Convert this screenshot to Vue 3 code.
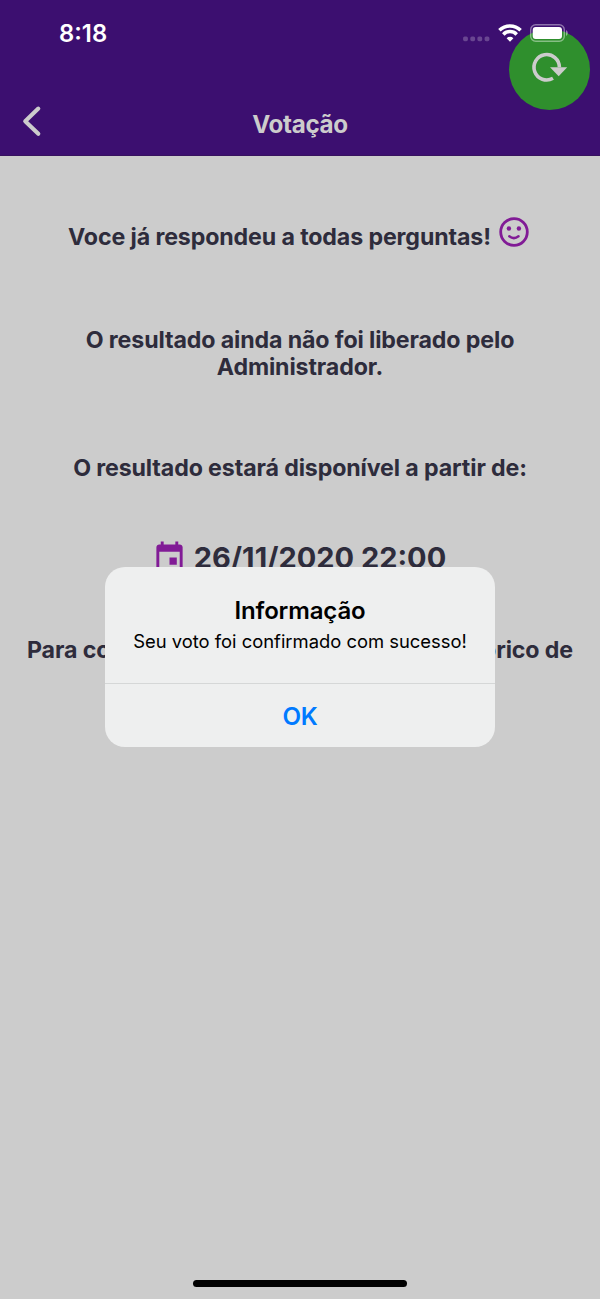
<script setup>
const signalDots = [2.5, 9.7, 16.8, 24]
</script>

<template>
  <div class="screen">
    <header class="header">
      <div class="status">
        <span class="clock">8:18</span>
        <div class="indicators">
          <svg class="signal" width="27" height="18" viewBox="0 0 27 18">
            <rect v-for="x in signalDots" :key="x" :x="x - 2.4" y="12.4" width="4.8" height="4.8" rx="1.6" fill="#fff" fill-opacity=".23" />
          </svg>
          <svg class="wifi" width="24" height="18" viewBox="0 0 24 18">
            <g fill="none" stroke="#fff" stroke-width="3.5">
              <path d="M1.4 6.3A15 15 0 0 1 22.6 6.3" />
              <path d="M5.3 10.4A9.4 9.4 0 0 1 18.7 10.4" />
            </g>
            <path d="M12 17.7L8.6 14.2A4.9 4.9 0 0 1 15.4 14.2Z" fill="#fff" />
          </svg>
          <svg class="battery" width="38" height="18" viewBox="0 0 38 18">
            <rect x=".7" y=".7" width="33.6" height="16.6" rx="5" fill="none" stroke="#fff" stroke-opacity=".42" stroke-width="1.4" />
            <rect x="2.7" y="2.9" width="29.3" height="12.2" rx="3" fill="#fff" />
            <path d="M36 6v6q1.8-.8 1.8-3T36 6z" fill="#fff" fill-opacity=".45" />
          </svg>
        </div>
      </div>
      <div class="navbar">
        <svg class="back" width="20" height="32" viewBox="0 0 20 32">
          <path d="M16.3 3.6L3.2 16.2L16.3 28.8" fill="none" stroke="#ccc" stroke-width="4.1" stroke-linecap="round" stroke-linejoin="round" />
        </svg>
        <h1 class="title">Votação</h1>
      </div>
      <button class="refresh" aria-label="Atualizar">
        <svg width="81" height="81" viewBox="0 0 81 81">
          <path d="M50.4 38.3A12.7 12.7 0 1 0 44 49.3" fill="none" stroke="#ccc" stroke-width="3.6" />
          <path d="M41 38.3H58.2L49.7 47.2Z" fill="#ccc" />
        </svg>
      </button>
    </header>

    <main class="content">
      <p class="line answered">
        <span class="answered-text">Voce já respondeu a todas perguntas!</span>
        <svg class="smile" width="30" height="30" viewBox="0 0 30 30">
          <circle cx="15" cy="15" r="13.3" fill="none" stroke="#811b96" stroke-width="2.8" />
          <circle cx="9.9" cy="11.5" r="2.2" fill="#811b96" />
          <circle cx="19.9" cy="11.5" r="2.2" fill="#811b96" />
          <path d="M10.3 19.3Q14.9 22.9 19.5 19.3" fill="none" stroke="#811b96" stroke-width="2.5" stroke-linecap="round" />
        </svg>
      </p>
      <p class="line pending">O resultado ainda não foi liberado pelo<br />Administrador.</p>
      <p class="line available">O resultado estará disponível a partir de:</p>
      <p class="date">
        <svg width="35" height="35" viewBox="0 0 24 24" fill="#811b96">
          <path d="M17 12h-5v5h5v-5zM16 1v2H8V1H6v2H5c-1.11 0-1.99.9-1.99 2L3 19c0 1.1.89 2 2 2h14c1.1 0 2-.9 2-2V5c0-1.1-.9-2-2-2h-1V1h-2zm3 18H5V8h14v11z" />
        </svg>
        <span>26/11/2020 22:00</span>
      </p>
      <p class="line history"><span>Para co</span><span>órico de</span></p>
    </main>

    <section class="alert" role="alertdialog">
      <div class="alert-body">
        <h2>Informação</h2>
        <p>Seu voto foi confirmado com sucesso!</p>
      </div>
      <button class="ok">OK</button>
    </section>

    <div class="home-bar"></div>
  </div>
</template>

<style>
body {
  margin: 0;
  background: #ccc;
}
</style>

<style scoped>
.screen {
  position: relative;
  width: 600px;
  height: 1299px;
  overflow: hidden;
  background: #ccc;
  color: #2e2c3c;
  font-family: Inter, "Liberation Sans", sans-serif;
}
h1, h2, p {
  margin: 0;
}
span {
  white-space: nowrap;
}
button {
  border: 0;
  padding: 0;
  font-family: inherit;
}
svg {
  display: block;
  flex: none;
}
.header {
  position: relative;
  box-sizing: border-box;
  height: 156px;
  background: #3c0f70;
  border-bottom: 1px solid #37125e;
}
.status {
  position: relative;
  z-index: 2;
  display: flex;
  justify-content: space-between;
  align-items: flex-start;
  height: 64px;
  padding: 0 32px 0 59px;
  box-sizing: border-box;
}
.clock {
  margin-top: 19px;
  color: #fff;
  font-size: 23.8px;
  font-weight: 600;
  line-height: 30px;
}
.indicators {
  display: flex;
  margin-top: 24px;
}
.wifi {
  margin-left: 8.5px;
}
.battery {
  margin-left: 8px;
}
.navbar {
  display: grid;
  grid-template-columns: 40px 1fr 40px;
  align-items: start;
  padding: 0 22px;
}
.back {
  margin-top: 41px;
}
.title {
  margin-top: 45px;
  text-align: center;
  color: #ccc;
  font-size: 24.2px;
  line-height: 32px;
  font-weight: 700;
  letter-spacing: -0.3px;
}
.refresh {
  position: absolute;
  z-index: 1;
  left: 508.6px;
  top: 29.3px;
  width: 81px;
  height: 81px;
  border-radius: 50%;
  background: #2f8f2d;
}
.content {
  padding: 61px 27px 0;
}
.line {
  font-size: 23.2px;
  line-height: 27.7px;
  font-weight: 700;
  letter-spacing: -0.125px;
  text-align: center;
}
.answered {
  display: flex;
  justify-content: center;
  gap: 8px;
  padding-right: 3px;
}
.answered-text {
  margin-top: 7px;
}
.pending {
  margin-top: 75px;
}
.available {
  margin-top: 73px;
}
.date {
  display: flex;
  justify-content: center;
  gap: 7px;
  margin-top: 57px;
  padding-right: 2px;
  font-size: 29px;
  line-height: 35px;
  font-weight: 700;
}
.history {
  display: flex;
  justify-content: space-between;
  margin-top: 62px;
}
.alert {
  position: absolute;
  left: 105px;
  top: 567px;
  width: 390px;
  height: 180px;
  display: flex;
  flex-direction: column;
  border-radius: 20px;
  overflow: hidden;
  background: #eeefef;
  color: #000;
  text-align: center;
}
.alert-body {
  box-sizing: border-box;
  height: 116px;
  padding-top: 29px;
}
.alert h2 {
  font-size: 24px;
  line-height: 30px;
  font-weight: 600;
  letter-spacing: -0.15px;
}
.alert p {
  margin-top: 3px;
  font-size: 18.4px;
  line-height: 24px;
}
.ok {
  flex: 1;
  padding-top: 1px;
  border-top: 1.5px solid #d5d7d7;
  background: transparent;
  color: #007aff;
  font-size: 24.2px;
  font-weight: 600;
  letter-spacing: -0.4px;
}
.home-bar {
  position: absolute;
  left: 193px;
  top: 1280px;
  width: 214px;
  height: 7px;
  border-radius: 4px;
  background: #000;
}
</style>
